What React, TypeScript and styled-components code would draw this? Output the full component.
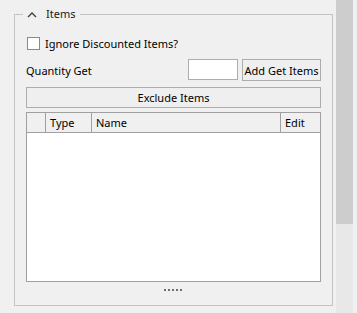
import React from "react";
import styled, { createGlobalStyle } from "styled-components";

const Global = createGlobalStyle`
  html, body { margin: 0; padding: 0; background: #f0f0f0; }
  body { font-family: "Noto Sans", "Segoe UI", sans-serif; font-size: 11px; color: #000; }
`;

const Page = styled.div`
  width: 357px;
  height: 313px;
  display: flex;
  background: #f0f0f0;
  overflow: hidden;
`;

const Content = styled.div`
  width: 336px;
  padding: 14px 0 0 14px;
  box-sizing: border-box;
`;

const Scrollbar = styled.div`
  width: 17px;
  height: 313px;
  background: #e8e8e8;
`;

const Thumb = styled.div`
  height: 224px;
  background: #cdcdcd;
`;

const GroupBox = styled.div`
  position: relative;
  width: 319px;
  height: 292px;
  box-sizing: border-box;
  border: 1px solid #c4c4c4;
  padding: 21px 11px 0 11px;
  display: flex;
  flex-direction: column;
`;

const Legend = styled.div`
  position: absolute;
  left: 8px;
  top: -9px;
  height: 16px;
  padding: 0 5px 0 4px;
  background: #f0f0f0;
  display: flex;
  align-items: center;
  gap: 9px;
  line-height: 16px;
  color: #1a1a1a;
`;

const CheckRow = styled.label`
  display: flex;
  align-items: center;
  gap: 5px;
  height: 15px;
  padding-left: 1px;
  white-space: nowrap;
`;

const Box = styled.span`
  width: 13px;
  height: 13px;
  box-sizing: border-box;
  border: 1px solid #8a8a8a;
  background: #fff;
`;

const QtyRow = styled.div`
  display: flex;
  align-items: center;
  justify-content: space-between;
  height: 22px;
  margin-top: 8px;
`;

const Right = styled.div`
  display: flex;
  align-items: flex-start;
  gap: 4px;
  height: 22px;
`;

const Input = styled.div`
  width: 50px;
  height: 21px;
  box-sizing: border-box;
  border: 1px solid #adadad;
  background: #fff;
`;

const Button = styled.div<{ $w?: number; $h: number }>`
  width: ${(p) => (p.$w ? `${p.$w}px` : "auto")};
  height: ${(p) => p.$h}px;
  box-sizing: border-box;
  border: 1px solid #adadad;
  background: #efefef;
  display: flex;
  align-items: center;
  justify-content: center;
  line-height: 1;
  white-space: nowrap;
`;

const ExcludeButton = styled(Button)`
  margin-top: 6px;
`;

const Table = styled.div`
  margin-top: 4px;
  height: 170px;
  box-sizing: border-box;
  border: 1px solid #a0a0a0;
  background: #fff;
`;

const Header = styled.div`
  display: grid;
  grid-template-columns: 19px 46px 189px 1fr;
  height: 20px;
  box-sizing: border-box;
  border-bottom: 1px solid #a0a0a0;
  background: #f0f0f0;
`;

const HeadCell = styled.div<{ $last?: boolean }>`
  border-right: ${(p) => (p.$last ? "none" : "1px solid #a0a0a0")};
  padding-left: 4px;
  display: flex;
  align-items: center;
`;

const Dots = styled.div`
  margin-top: 7px;
  display: flex;
  justify-content: center;
  gap: 2px;
  padding-right: 2px;
`;

const Dot = styled.span`
  width: 2px;
  height: 2px;
  background: #6e6e6e;
`;

export default function App() {
  return (
    <Page>
      <Global />
      <Content>
        <GroupBox>
          <Legend>
            <svg width="10" height="7" viewBox="0 0 10 7">
              <path d="M1 6 L5 2 L9 6" fill="none" stroke="#444" strokeWidth="1.4" />
            </svg>
            <span>Items</span>
          </Legend>
          <CheckRow>
            <Box />
            <span>Ignore Discounted Items?</span>
          </CheckRow>
          <QtyRow>
            <span>Quantity Get</span>
            <Right>
              <Input />
              <Button $w={79} $h={22}>Add Get Items</Button>
            </Right>
          </QtyRow>
          <ExcludeButton $h={21}>Exclude Items</ExcludeButton>
          <Table>
            <Header>
              <HeadCell />
              <HeadCell>Type</HeadCell>
              <HeadCell>Name</HeadCell>
              <HeadCell $last>Edit</HeadCell>
            </Header>
          </Table>
          <Dots>
            {[0, 1, 2, 3, 4].map((i) => (
              <Dot key={i} />
            ))}
          </Dots>
        </GroupBox>
      </Content>
      <Scrollbar>
        <Thumb />
      </Scrollbar>
    </Page>
  );
}
